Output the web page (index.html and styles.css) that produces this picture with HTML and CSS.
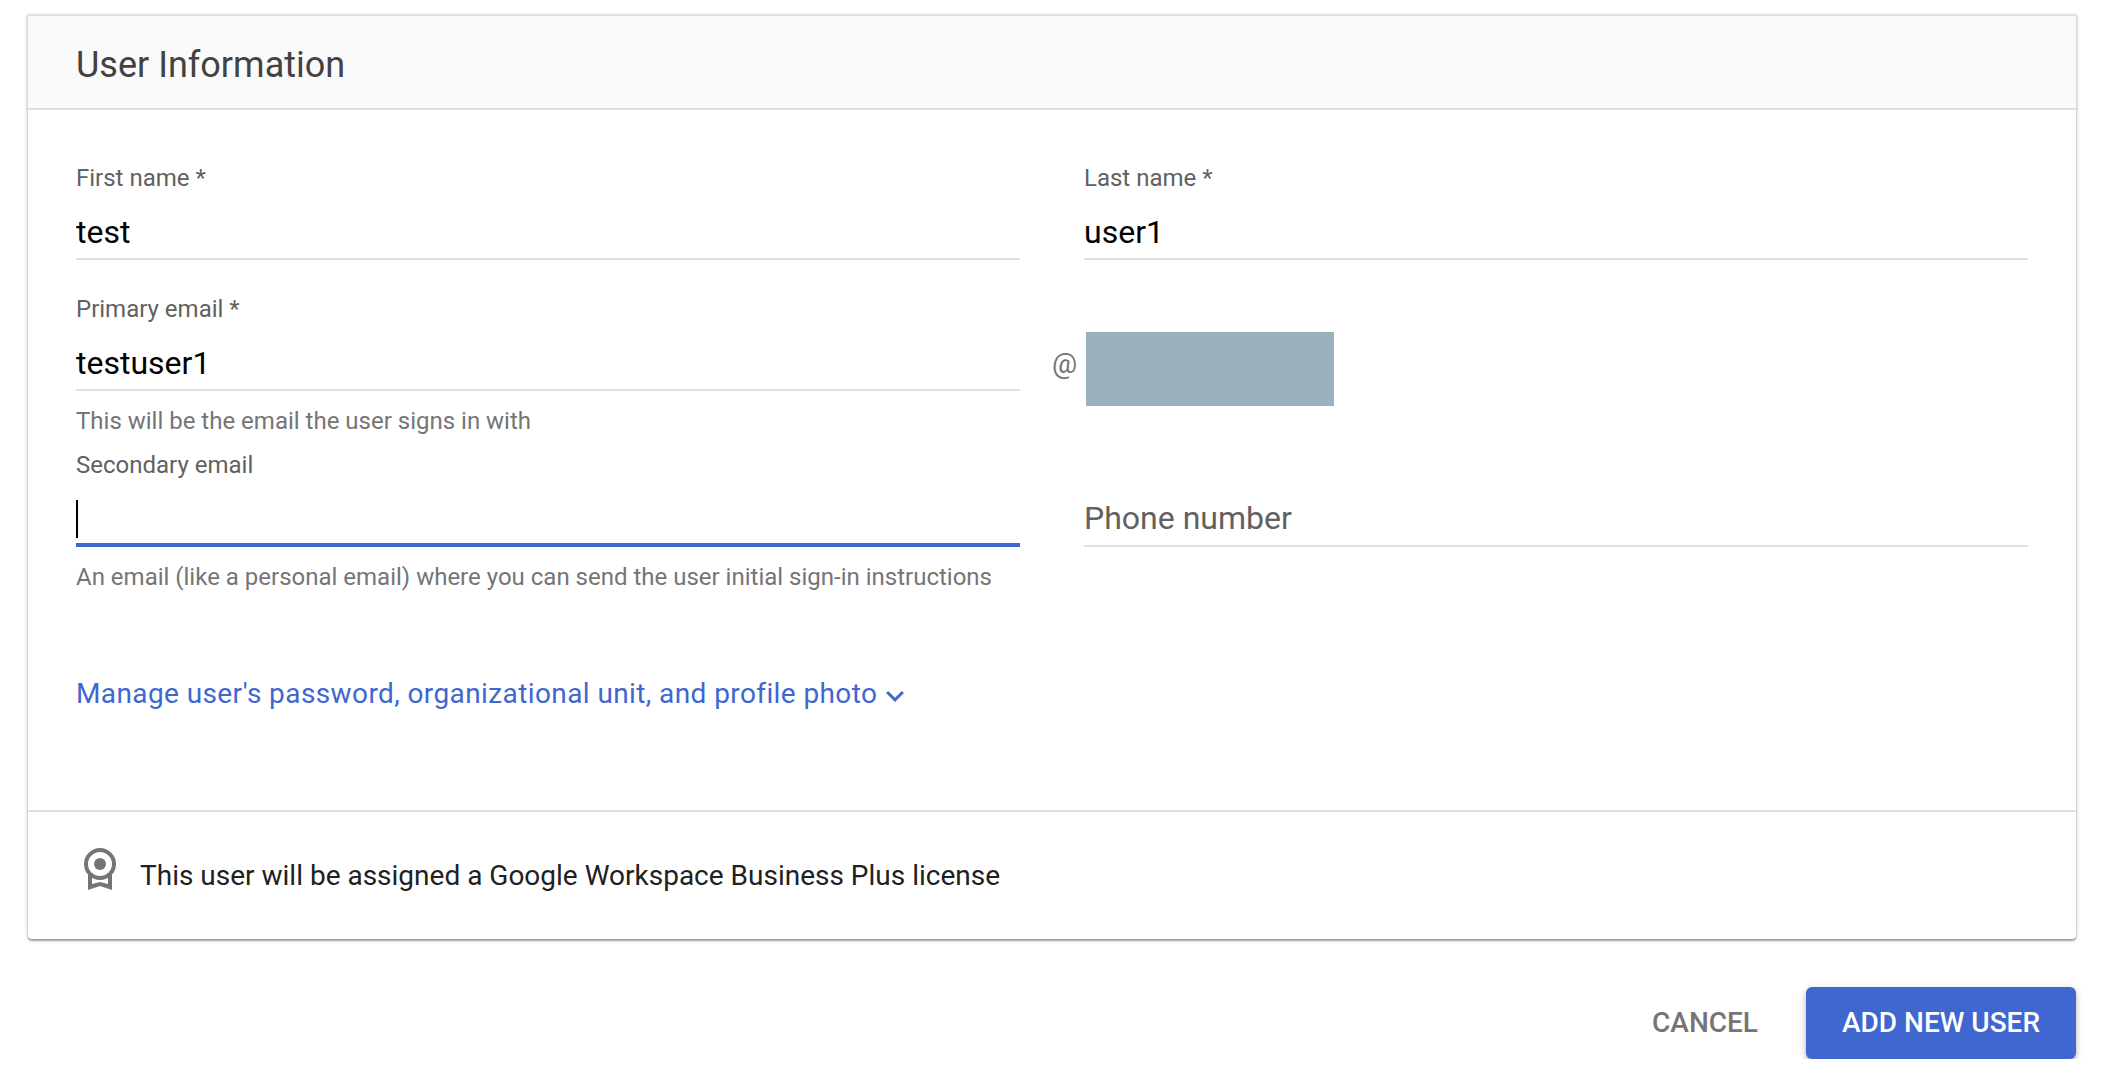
FILE: index.html
```html
<!DOCTYPE html>
<html lang="en">
<head>
<meta charset="utf-8">
<title>Add new user</title>
<link rel="stylesheet" href="styles.css">
</head>
<body>
<main class="page">
  <section class="card">
    <header class="card-header"><h1 class="title">User Information</h1></header>
    <form class="form">
      <div class="row row-names">
        <div class="field">
          <label class="label" for="first">First name *</label>
          <input class="input" id="first" value="test">
        </div>
        <div class="field">
          <label class="label" for="last">Last name *</label>
          <input class="input" id="last" value="user1">
        </div>
      </div>
      <div class="row row-primary">
        <div class="field">
          <label class="label" for="primary">Primary email *</label>
          <input class="input" id="primary" value="testuser1">
          <p class="hint">This will be the email the user signs in with</p>
        </div>
        <div class="domain">
          <span class="at">@</span>
          <span class="domain-block"></span>
        </div>
      </div>
      <div class="row">
        <div class="field">
          <label class="label" for="secondary">Secondary email</label>
          <div class="input input-active" id="secondary"><span class="caret"></span></div>
          <p class="hint">An email (like a personal email) where you can send the user initial sign-in instructions</p>
        </div>
        <div class="field field-empty">
          <input class="input input-empty" placeholder="Phone number">
        </div>
      </div>
      <a class="manage"><span class="manage-text">Manage user's password, organizational unit, and profile photo</span>
        <svg class="chevron" width="18" height="11.1" viewBox="6 8.59 12 7.41"><path d="M16.59 8.59 12 13.17 7.41 8.59 6 10l6 6 6-6z" fill="currentColor"/></svg>
      </a>
    </form>
    <footer class="license">
      <svg class="badge" width="32" height="42" viewBox="0 0 32 42">
        <path fill="currentColor" fill-rule="evenodd" d="M4 24h24v18l-12-4-12 4zM8 28h16v8l-8-2-8 2z"/>
        <circle cx="16" cy="16" r="14" fill="#fff" stroke="currentColor" stroke-width="4"/>
        <circle cx="16" cy="16" r="6" fill="currentColor"/>
      </svg>
      <span class="license-text">This user will be assigned a Google Workspace Business Plus license</span>
    </footer>
  </section>
  <div class="actions">
    <button class="button button-flat">CANCEL</button>
    <button class="button button-primary">ADD NEW USER</button>
  </div>
</main>
</body>
</html>
```
FILE: styles.css
```css
* { box-sizing: border-box; }
body { margin: 0; background: #fff; font-family: Roboto, sans-serif; }
.page { padding: 16px 36px 0 28px; }
.card {
  height: 923px;
  border-radius: 4px;
  background: #fff;
  box-shadow: 0 2px 2px rgba(0,0,0,.32), 0 0 4px rgba(0,0,0,.24);
  display: flex;
  flex-direction: column;
}
.card-header {
  height: 96px;
  margin: -2px -2px 0;
  padding: 25px 48px 0;
  background: #fafafa;
  border: 2px solid #e0e0e0;
  border-radius: 4px 4px 0 0;
}
.title { margin: 0; font-size: 36px; line-height: 48px; font-weight: 400; color: #424242; }
.form { flex: 1; padding: 52px 48px 0; }
.row { display: grid; grid-template-columns: 944px 944px; column-gap: 64px; align-items: start; }
.row-names { margin-bottom: 33px; }
.row-primary { margin-bottom: 12px; }
.field { display: flex; flex-direction: column; }
.field-empty { padding-top: 46px; }
.label { height: 32px; margin-bottom: 14px; font-size: 24px; line-height: 32px; color: #616161; }
.input {
  height: 52px;
  width: 100%;
  padding: 0 0 2px;
  border: 0;
  border-bottom: 2px solid #e0e0e0;
  background: transparent;
  font: 32px/48px Roboto, sans-serif;
  color: #000;
  outline: none;
}
.input-empty { padding-bottom: 4px; }
.input::placeholder { color: #616161; opacity: 1; }
.input-active { border-bottom: 4px solid #4066cf; }
.caret { display: block; width: 2px; height: 38px; margin-top: 5px; background: #000; }
.hint { margin: 14px 0 0; font-size: 24px; line-height: 32px; color: #757575; white-space: nowrap; }
.domain { display: flex; margin-left: -32px; padding-top: 39px; }
.at { width: 34px; padding-top: 12px; font-size: 28px; line-height: 40px; color: #757575; }
.domain-block { width: 248px; height: 74px; background: #9ab0bd; }
.manage { display: inline-flex; align-items: center; margin-top: 81px; height: 40px; color: #4066cf; }
.manage-text { font-size: 28px; line-height: 40px; letter-spacing: .4px; white-space: nowrap; }
.chevron { margin: 6px 0 0 9px; }
.license { height: 129px; padding: 36px 56px 0; border-top: 2px solid #e0e0e0; display: flex; align-items: flex-start; color: #757575; }
.license-text { margin: 8px 0 0 24px; font-size: 28px; line-height: 40px; color: #212121; }
.actions { display: flex; justify-content: flex-end; gap: 16px; margin-top: 48px; }
.button { height: 72px; padding: 0; border: 0; border-radius: 6px; font: 500 28px/40px Roboto, sans-serif; }
.button-flat { width: 170px; background: transparent; color: #757575; }
.button-primary { width: 270px; background: #4066cf; color: #fff; box-shadow: 0 4px 4px rgba(0,0,0,.18), 0 2px 10px rgba(0,0,0,.16); }
```
